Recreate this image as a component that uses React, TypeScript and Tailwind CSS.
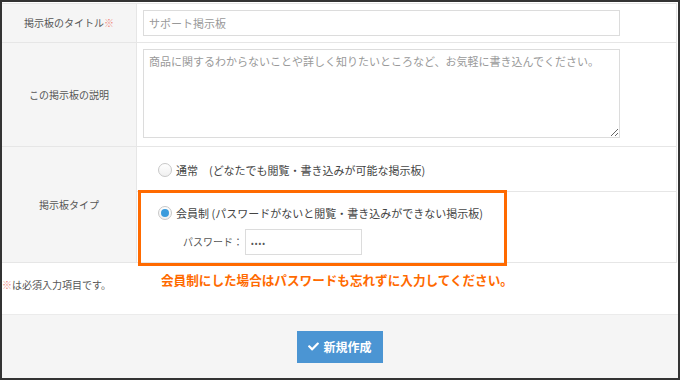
import React from "react";
import { FaCheck } from "react-icons/fa";

function Radio({ checked }: { checked?: boolean }) {
  return (
    <span className="flex h-[14px] w-[14px] shrink-0 items-center justify-center rounded-full border border-[#c8c8c8] bg-gradient-to-b from-white to-[#f0f0f0]">
      {checked ? <span className="h-[8px] w-[8px] rounded-full bg-[#3a9bdc]" /> : null}
    </span>
  );
}

export default function App() {
  return (
    <div className="relative flex h-[380px] w-[680px] flex-col border-2 border-[#333] bg-white font-['Noto_Sans_CJK_JP',sans-serif] text-[#444]">
      <div className="pt-px">
        <div className="mr-px border-t border-r border-[#e6e6e6]">
          {/* Row 1 */}
          <div className="flex h-[39px] border-b border-[#e6e6e6]">
            <div className="flex w-[135px] items-center justify-center border-r border-[#e6e6e6] bg-[#f5f5f5] text-[10px] leading-none text-[#555]">
              掲示板のタイトル<span className="text-[#f08a80]">※</span>
            </div>
            <div className="flex flex-1 items-center pl-[6px]">
              <input
                className="h-[26px] w-[477px] border border-[#dcdcdc] px-[5px] text-[11px] outline-none placeholder:text-[#999]"
                placeholder="サポート掲示板"
              />
            </div>
          </div>
          {/* Row 2 */}
          <div className="flex h-[104px] border-b border-[#e6e6e6]">
            <div className="flex w-[135px] items-center justify-center border-r border-[#e6e6e6] bg-[#f5f5f5] text-[10px] leading-none text-[#555]">
              この掲示板の説明
            </div>
            <div className="flex-1 pl-[6px] pt-[6px]">
              <textarea
                className="block h-[89px] w-[477px] border border-[#dcdcdc] px-[5px] py-[3px] text-[11px] leading-[16px] outline-none placeholder:text-[#999]"
                placeholder="商品に関するわからないことや詳しく知りたいところなど、お気軽に書き込んでください。"
              />
            </div>
          </div>
          {/* Row 3 */}
          <div className="flex h-[116px] border-b border-[#e6e6e6]">
            <div className="flex w-[135px] items-center justify-center border-r border-[#e6e6e6] bg-[#f5f5f5] text-[10px] leading-none text-[#555]">
              掲示板タイプ
            </div>
            <div className="flex flex-1 flex-col">
              <div className="flex h-[45px] items-center gap-[4px] border-b border-[#e6e6e6] pl-[21px] pt-[2px] text-[11px] leading-none">
                <Radio />
                <span>通常　(どなたでも閲覧・書き込みが可能な掲示板)</span>
              </div>
              <div className="flex flex-col pt-[13px]">
                <div className="flex h-[16px] items-center gap-[4px] pl-[21px] text-[11px] leading-none">
                  <Radio checked />
                  <span>会員制 (パスワードがないと閲覧・書き込みができない掲示板)</span>
                </div>
                <div className="mt-[8px] flex items-center gap-[2px] pl-[46px]">
                  <span className="text-[10px] leading-none text-[#555]">パスワード：</span>
                  <input
                    className="h-[26px] w-[117px] border border-[#dcdcdc] px-[5px] text-[8px] tracking-[1px] text-[#555] outline-none"
                    defaultValue="••••"
                    readOnly
                  />
                </div>
              </div>
            </div>
          </div>
        </div>
      </div>

      <div className="h-[51px] pt-[15px] text-[10px] leading-[14px] text-[#555]">
        <span className="text-[#f08a80]">※</span>は必須入力項目です。
      </div>

      <div className="flex flex-1 items-center justify-center border-t border-[#ebebeb] bg-[#f5f5f5]">
        <button className="flex h-[32px] w-[86px] items-center justify-center gap-[4px] bg-[#4b95d3] text-[12px] font-bold leading-none text-white">
          <FaCheck className="h-[11px] w-[11px]" />
          新規作成
        </button>
      </div>

      {/* annotation overlay */}
      <div className="pointer-events-none absolute left-[136px] top-[188px] h-[76px] w-[369px] border-[3px] border-[#ff6a00]" />
      <div className="pointer-events-none absolute left-[159px] top-[271px] text-[12.6px] font-bold leading-[14px] text-[#ff6a00]">
        会員制にした場合はパスワードも忘れずに入力してください。
      </div>
    </div>
  );
}
